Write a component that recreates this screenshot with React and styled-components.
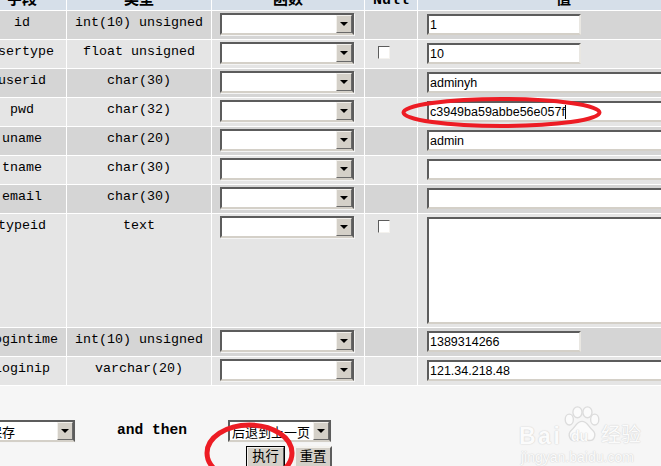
import styled, { createGlobalStyle } from 'styled-components'

const GlobalStyle = createGlobalStyle`
  html, body {
    margin: 0;
    padding: 0;
    background: #f6f6f6;
  }
`

const Page = styled.div`
  position: relative;
  width: 661px;
  height: 466px;
  overflow: hidden;
  background: #f6f6f6;
  font-family: "Liberation Mono", "Noto Sans CJK SC", monospace;
  font-size: 13.33px;
  color: #000;
`

const Table = styled.table`
  table-layout: fixed;
  width: 733px;
  margin: -19px 0 0 -23px;
  border-collapse: separate;
  border-spacing: 1px;
  background: #fff;
`

const HeadCell = styled.th`
  height: 28px;
  padding: 11px 0 0;
  background: #d6dfe9;
  font-size: 15px;
  font-weight: bold;
  line-height: 16px;
  text-align: center;
  vertical-align: top;
  box-sizing: border-box;
`

const Cell = styled.td`
  height: ${({ $tall }) => ($tall ? 113 : 28)}px;
  padding: 4px 0 0;
  box-sizing: border-box;
  background: ${({ $dark }) => ($dark ? '#d5d5d5' : '#e5e5e5')};
  line-height: 16px;
  text-align: center;
  vertical-align: top;
`

const FieldCell = styled(Cell)`
  padding-top: 2px;
  padding-left: 8px;
  text-align: left;
`

const ValueCell = styled(Cell)`
  padding-top: 3px;
  padding-left: 9px;
  text-align: left;
`

const SelectBox = styled.div`
  display: flex;
  justify-content: space-between;
  box-sizing: border-box;
  width: ${({ $width }) => $width}px;
  height: 22px;
  border: 2px solid #5c5c5c;
  border-bottom-color: #d4d0c8;
  background: #fff;
  box-shadow: 1px 1px 0 #f4f4f4;
  font-family: "Noto Sans CJK SC", sans-serif;
  font-size: 13px;
  line-height: 19px;
  white-space: nowrap;
`

const SelectText = styled.span`
  padding-left: 2px;
  margin-left: ${({ $shift }) => $shift || 0}px;
`

const ArrowButton = styled.span`
  display: flex;
  align-items: center;
  justify-content: center;
  flex: none;
  box-sizing: border-box;
  width: 16px;
  height: 18px;
  background: #d4d0c8;
  border: 1px solid;
  border-color: #f2f0ec #6a6a6a #6a6a6a #f2f0ec;

  &::after {
    content: '';
    border-left: 4px solid transparent;
    border-right: 4px solid transparent;
    border-top: 4px solid #000;
  }
`

const Check = styled.span`
  display: block;
  box-sizing: border-box;
  width: 12px;
  height: 13px;
  margin: 2px 0 0 13px;
  border: 1px solid;
  border-color: #5c5c5c #f4f2ee #f4f2ee #5c5c5c;
  background: #fff;
`

const ValueBox = styled.div`
  box-sizing: border-box;
  width: ${({ $long }) => ($long ? 270 : 154)}px;
  height: ${({ $area }) => ($area ? 107 : 21)}px;
  padding-left: 1px;
  border: 2px solid;
  border-color: #5c5c5c #e9e7e2 #d4d0c8 #5c5c5c;
  background: #fff;
  font-family: "Liberation Sans", Arial, sans-serif;
  font-size: 12.5px;
  line-height: 19px;
  white-space: nowrap;
`

const Caret = styled.span`
  display: inline-block;
  width: 1px;
  height: 14px;
  background: #000;
  vertical-align: -3px;
`

const Footer = styled.div`
  display: flex;
  align-items: flex-start;
  margin: 34px 0 0 -25px;
`

const ThenLabel = styled.b`
  margin: 1px 41px 0 42px;
  font-family: "Liberation Mono", monospace;
  font-size: 14.6px;
  line-height: 18px;
`

const ButtonRow = styled.div`
  display: flex;
  gap: 9px;
  margin: 4px 0 0 246px;
`

const Button = styled.button`
  display: block;
  box-sizing: border-box;
  width: ${({ $default }) => ($default ? 39 : 38)}px;
  height: 24px;
  padding: 0 0 5px;
  border: 2px solid;
  border-color: #f4f2ee #5c5c5c #5c5c5c #f4f2ee;
  outline: ${({ $default }) => ($default ? '1px solid #000' : 'none')};
  outline-offset: -1px;
  background: #d4d0c8;
  font-family: "Noto Sans CJK SC", sans-serif;
  font-size: 13.33px;
  line-height: 16px;
  color: #000;
`

const Marks = styled.svg`
  position: absolute;
  left: 0;
  top: 0;
  pointer-events: none;
`

const Watermark = styled.div`
  position: absolute;
  left: 519px;
  top: 404px;
  width: 128px;
  height: 60px;
  color: #fbfbfb;
  font-family: "Liberation Sans", Arial, sans-serif;
  text-shadow: 0 0 1.5px #d0d0d0, 0 0 1px #d8d8d8;
`

const Paw = styled.svg`
  position: absolute;
  left: 43px;
  top: 0;
`

const Brand = styled.div`
  position: absolute;
  top: 19px;
  left: 0;
  font-size: 23px;
  font-weight: bold;
  line-height: 26px;
  letter-spacing: 2.5px;
  white-space: nowrap;
`

const BrandDu = styled.div`
  position: absolute;
  top: 24px;
  left: 52px;
  font-size: 14px;
  font-weight: bold;
  line-height: 16px;
  white-space: nowrap;
`

const BrandCn = styled.div`
  position: absolute;
  top: 18px;
  left: 82px;
  font-family: "Noto Sans CJK SC", sans-serif;
  font-size: 20px;
  line-height: 24px;
  white-space: nowrap;
`

const BrandUrl = styled.div`
  position: absolute;
  top: 45px;
  left: 2px;
  font-size: 14px;
  line-height: 16px;
  white-space: nowrap;
`

const rows = [
  { name: 'id', type: 'int(10) unsigned', value: '1' },
  { name: 'usertype', type: 'float unsigned', value: '10', nullable: true },
  { name: 'userid', type: 'char(30)', value: 'adminyh', long: true },
  { name: 'pwd', type: 'char(32)', value: 'c3949ba59abbe56e057f', long: true, caret: true },
  { name: 'uname', type: 'char(20)', value: 'admin', long: true },
  { name: 'tname', type: 'char(30)', value: '', long: true },
  { name: 'email', type: 'char(30)', value: '', long: true },
  { name: 'typeid', type: 'text', value: '', long: true, area: true, nullable: true },
  { name: 'logintime', type: 'int(10) unsigned', value: '1389314266' },
  { name: 'loginip', type: 'varchar(20)', value: '121.34.218.48', long: true },
]

const App = () => (
  <Page>
    <GlobalStyle />
    <Table>
      <colgroup>
        <col style={{ width: 88 }} />
        <col style={{ width: 144 }} />
        <col style={{ width: 152 }} />
        <col style={{ width: 52 }} />
        <col style={{ width: 291 }} />
      </colgroup>
      <thead>
        <tr>
          <HeadCell>字段</HeadCell>
          <HeadCell>类型</HeadCell>
          <HeadCell>函数</HeadCell>
          <HeadCell>Null</HeadCell>
          <HeadCell>值</HeadCell>
        </tr>
      </thead>
      <tbody>
        {rows.map((row, i) => {
          const dark = i % 2 === 0
          return (
            <tr key={row.name}>
              <Cell $dark={dark} $tall={row.area}>{row.name}</Cell>
              <Cell $dark={dark} $tall={row.area}>{row.type}</Cell>
              <FieldCell $dark={dark} $tall={row.area}>
                <SelectBox $width={134}>
                  <span />
                  <ArrowButton />
                </SelectBox>
              </FieldCell>
              <Cell $dark={dark} $tall={row.area}>
                {row.nullable && <Check />}
              </Cell>
              <ValueCell $dark={dark} $tall={row.area}>
                <ValueBox $long={row.long} $area={row.area}>
                  {row.value}
                  {row.caret && <Caret />}
                </ValueBox>
              </ValueCell>
            </tr>
          )
        })}
      </tbody>
    </Table>
    <Footer>
      <SelectBox $width={100}>
        <SelectText $shift={10}>保存</SelectText>
        <ArrowButton />
      </SelectBox>
      <ThenLabel>and then</ThenLabel>
      <SelectBox $width={103}>
        <SelectText>后退到上一页</SelectText>
        <ArrowButton />
      </SelectBox>
    </Footer>
    <ButtonRow>
      <Button $default>执行</Button>
      <Button>重置</Button>
    </ButtonRow>
    <Watermark>
      <Paw width="40" height="42" viewBox="0 0 44 42">
        <g fill="#fbfbfb" stroke="#dcdcdc" strokeWidth="1.5">
          <ellipse cx="8" cy="15" rx="4.5" ry="6" />
          <ellipse cx="17" cy="7" rx="5" ry="6" />
          <ellipse cx="28" cy="7" rx="5" ry="6" />
          <ellipse cx="36" cy="15" rx="4.5" ry="6" />
          <path d="M22 17c-6 0-7 6-12 10-4 4-2 12 5 11 3-1 5-1 7-1s4 0 7 1c7 1 9-7 5-11-5-4-6-10-12-10z" />
        </g>
      </Paw>
      <Brand>Bai</Brand>
      <BrandDu>du</BrandDu>
      <BrandCn>经验</BrandCn>
      <BrandUrl>jingyan.baidu.com</BrandUrl>
    </Watermark>
    <Marks width="661" height="466" viewBox="0 0 661 466">
      <ellipse cx="501.5" cy="112.5" rx="98" ry="13.5" fill="none" stroke="#ed1c24" strokeWidth="4" />
      <ellipse cx="249.5" cy="453" rx="42.5" ry="28" fill="none" stroke="#ed1c24" strokeWidth="5" />
    </Marks>
  </Page>
)

export default App
